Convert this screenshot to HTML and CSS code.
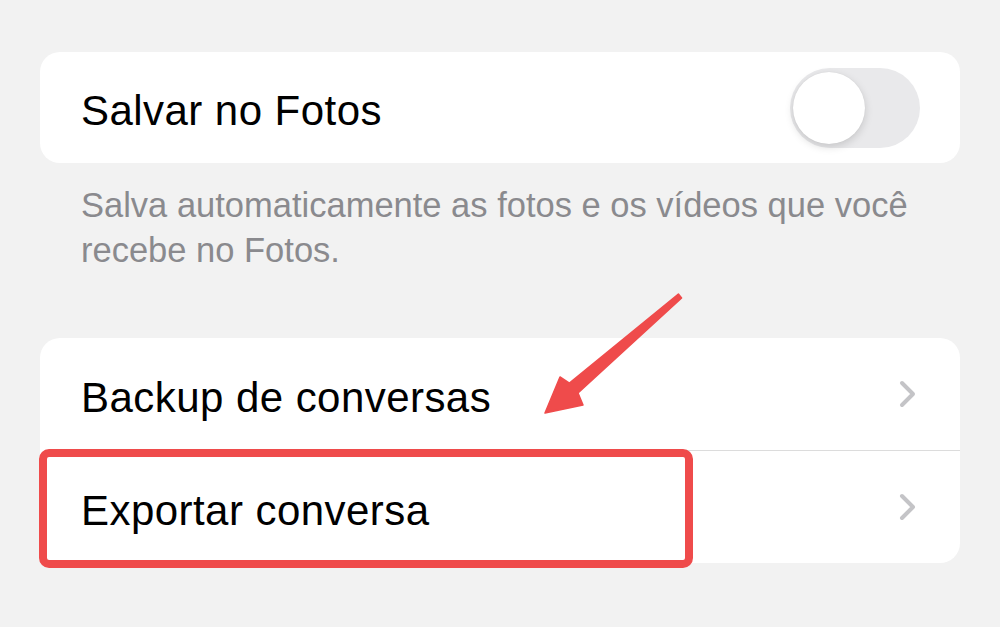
FILE: index.html
```html
<!DOCTYPE html>
<html lang="pt">
<head>
<meta charset="UTF-8">
<meta name="viewport" content="width=device-width, initial-scale=1.0">
<title>Conversas</title>
<link rel="stylesheet" href="styles.css">
</head>
<body>
<div class="screen">
<div class="card">
<div class="row">
<span class="row-label">Salvar no Fotos</span>
<div class="toggle"><div class="knob"></div></div>
</div>
</div>
<p class="note">Salva automaticamente as fotos e os vídeos que você recebe no Fotos.</p>
<div class="card">
<div class="row">
<span class="row-label">Backup de conversas</span>
<svg class="chevron" width="20" height="28" viewBox="0 0 20 28"><polyline points="4,3 15,14 4,25" fill="none" stroke="#c4c4c7" stroke-width="4" stroke-linecap="round" stroke-linejoin="round"/></svg>
</div>
<div class="divider"></div>
<div class="row marked">
<span class="row-label">Exportar conversa</span>
<svg class="chevron" width="20" height="28" viewBox="0 0 20 28"><polyline points="4,3 15,14 4,25" fill="none" stroke="#c4c4c7" stroke-width="4" stroke-linecap="round" stroke-linejoin="round"/></svg>
<!-- annotation -->
<div class="highlight"></div>
</div>
</div>
<svg class="arrow" width="1000" height="627" viewBox="0 0 1000 627">
<polygon points="678.4,294.1 681.6,297.9 578,393 583,405 545,413 560,377 569.4,383.2" fill="#ef4b4b" stroke="#ef4b4b" stroke-width="1.5" stroke-linejoin="round"/>
</svg>
</div>
</body>
</html>
```

FILE: styles.css
```css
body {
margin: 0;
padding: 0;
background-color: #f2f2f2;
font-family: 'Liberation Sans', Arial, sans-serif;
}
.screen {
position: relative;
width: 1000px;
height: 627px;
padding: 52px 40px 0 40px;
box-sizing: border-box;
overflow: hidden;
}
.card {
background-color: #fff;
border-radius: 20px;
}
.row {
position: relative;
display: flex;
align-items: center;
justify-content: space-between;
height: 112px;
padding: 7px 42px 0 41px;
box-sizing: border-box;
}
.card:first-child .row {
height: 111px;
padding-right: 40px;
}
.row-label {
font-size: 42px;
letter-spacing: 0.45px;
color: #000;
}
.divider {
height: 1px;
margin-left: 41px;
background-color: #dcdcdc;
}
.toggle {
width: 130px;
height: 80px;
border-radius: 40px;
background-color: #e9e9eb;
position: relative;
margin-top: -7px;
}
.knob {
position: absolute;
left: 3px;
top: 4px;
width: 72px;
height: 72px;
border-radius: 50%;
background-color: #fff;
box-shadow: 0 3px 8px rgba(0, 0, 0, 0.15), 0 0 1px rgba(0, 0, 0, 0.1);
}
.chevron {
margin-top: -7px;
}
.note {
margin: 20px 0 65px 41px;
font-size: 34.5px;
line-height: 45px;
color: #8a8a8e;
}
.highlight {
position: absolute;
left: -1px;
top: -2px;
width: 654px;
height: 119px;
border: 8px solid #ef4b4b;
border-radius: 10px;
box-sizing: border-box;
}
.arrow {
position: absolute;
left: 0;
top: 0;
}
```
